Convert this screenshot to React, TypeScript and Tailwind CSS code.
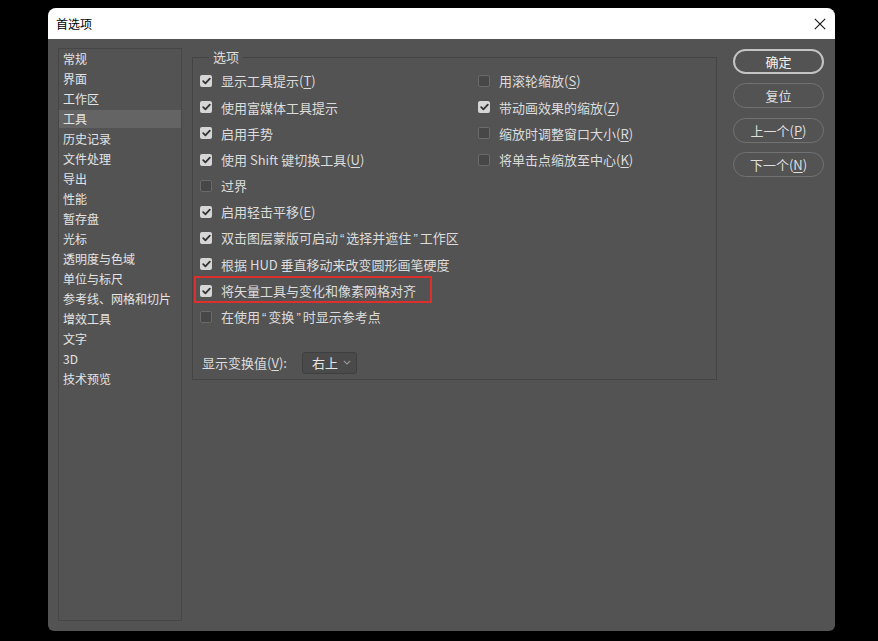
import React from "react"

const font = { fontFamily: '"Noto Sans CJK SC", "Noto Sans", sans-serif' }

const categories = [
  "常规",
  "界面",
  "工作区",
  "工具",
  "历史记录",
  "文件处理",
  "导出",
  "性能",
  "暂存盘",
  "光标",
  "透明度与色域",
  "单位与标尺",
  "参考线、网格和切片",
  "增效工具",
  "文字",
  "3D",
  "技术预览",
]

type Opt = { label: string; key?: string; checked: boolean }

const leftOptions: Opt[] = [
  { label: "显示工具提示", key: "T", checked: true },
  { label: "使用富媒体工具提示", checked: true },
  { label: "启用手势", checked: true },
  { label: "使用 Shift 键切换工具", key: "U", checked: true },
  { label: "过界", checked: false },
  { label: "启用轻击平移", key: "E", checked: true },
  { label: "双击图层蒙版可启动“选择并遮住”工作区", checked: true },
  { label: "根据 HUD 垂直移动来改变圆形画笔硬度", checked: true },
  { label: "将矢量工具与变化和像素网格对齐", checked: true },
  { label: "在使用“变换”时显示参考点", checked: false },
]

const rightOptions: Opt[] = [
  { label: "用滚轮缩放", key: "S", checked: false },
  { label: "带动画效果的缩放", key: "Z", checked: true },
  { label: "缩放时调整窗口大小", key: "R", checked: false },
  { label: "将单击点缩放至中心", key: "K", checked: false },
]

// the dialog draws curly quotes with the narrow latin glyphs
function withQuotes(text: string) {
  return text.split(/([“”])/).map((part, i) =>
    part === "“" || part === "”" ? (
      <span key={i} className="px-[2px] font-['Liberation_Sans',sans-serif]">
        {part}
      </span>
    ) : (
      part
    )
  )
}

function Label({ label, keyChar }: { label: string; keyChar?: string }) {
  return (
    <span className="whitespace-nowrap">
      {withQuotes(label)}
      {keyChar && (
        <>
          (<span className="underline underline-offset-2">{keyChar}</span>)
        </>
      )}
    </span>
  )
}

function Checkbox({ checked }: { checked: boolean }) {
  if (checked) {
    return (
      <span className="w-[12px] h-[12px] rounded-[2px] bg-[#d6d6d6] flex items-center justify-center shrink-0">
        <svg width="9" height="8" viewBox="0 0 9 8" fill="none">
          <path d="M1.2 4.2 L3.4 6.3 L7.8 1.6" stroke="#333" strokeWidth="1.8" strokeLinecap="round" strokeLinejoin="round" />
        </svg>
      </span>
    )
  }
  return <span className="w-[12px] h-[12px] rounded-[2px] bg-[#474747] border border-[#6a6a6a] shrink-0" />
}

function OptionRow({ opt, highlight }: { opt: Opt; highlight?: boolean }) {
  return (
    <div className="relative h-[26.2px] flex items-center gap-[9px]">
      <Checkbox checked={opt.checked} />
      <Label label={opt.label} keyChar={opt.key} />
      {highlight && (
        <span className="absolute left-[-6px] top-[-2px] w-[238px] h-[27px] border-2 border-[#dd2f2c] pointer-events-none" />
      )}
    </div>
  )
}

function PillButton({ children, primary }: { children: React.ReactNode; primary?: boolean }) {
  return (
    <button
      className={`w-[91px] h-[25px] rounded-full text-[13px] leading-none flex items-center justify-center ${
        primary ? "border-2 border-[#c4c4c4] text-[#f2f2f2]" : "border-[1.5px] border-[#727272] text-[#dedede]"
      }`}
    >
      {children}
    </button>
  )
}

export default function App() {
  return (
    <div className="w-[878px] h-[641px] bg-black pt-[8px] pl-[48px] overflow-hidden" style={font}>
      <div className="w-[787px] h-[623px] flex flex-col rounded-t-[8px] rounded-b-[6px] overflow-hidden bg-[#535353]">
        <div className="h-[31px] bg-white flex items-center justify-between pl-[8px] pr-[9px] shrink-0">
          <span className="text-[12px] text-black leading-none">首选项</span>
          <svg width="12" height="12" viewBox="0 0 12 12" fill="none">
            <path d="M0.8 0.8 L11.2 11.2 M11.2 0.8 L0.8 11.2" stroke="#111" strokeWidth="1.1" />
          </svg>
        </div>

        <div className="flex-1 flex pt-[9px] pl-[10px] pr-[11px] pb-[10px] text-[#dcdcdc]">
          <aside className="w-[124px] border border-[#464646] pt-[1px] shrink-0">
            {categories.map((c) => (
              <div
                key={c}
                className={`h-[18px] mb-[2px] pl-[4px] text-[12px] leading-[18px] text-[#e4e4e4] whitespace-nowrap ${
                  c === "工具" ? "bg-[#646464]" : ""
                }`}
              >
                {c}
              </div>
            ))}
          </aside>

          <fieldset className="ml-[10px] mt-[1px] w-[525px] h-[331px] self-start border border-[#444444] shrink-0 text-[13px]">
            <legend className="ml-[16px] px-[4px] leading-[16px] text-[13px] text-[#dedede]">选项</legend>
            <div className="pt-[3px] pl-[7px] grid grid-cols-[278px_1fr]">
              <div className="flex flex-col">
                {leftOptions.map((o, i) => (
                  <OptionRow key={o.label} opt={o} highlight={i === 8} />
                ))}
              </div>
              <div className="flex flex-col">
                {rightOptions.map((o) => (
                  <OptionRow key={o.label} opt={o} />
                ))}
              </div>
            </div>
            <div className="mt-[22px] pl-[9px] flex items-center">
              <span className="w-[100px] whitespace-nowrap">
                显示变换值(<span className="underline underline-offset-2">V</span>):
              </span>
              <div className="w-[55px] h-[22px] rounded-[3px] bg-[#4a4a4a] border border-[#3f3f3f] flex items-center justify-between pl-[9px] pr-[5px]">
                <span className="text-[#e6e6e6]">右上</span>
                <svg width="8" height="5" viewBox="0 0 8 5" fill="none">
                  <path d="M0.8 0.8 L4 4 L7.2 0.8" stroke="#9a9a9a" strokeWidth="1.1" />
                </svg>
              </div>
            </div>
          </fieldset>

          <div className="ml-[16px] mt-[1px] flex flex-col gap-[9.3px] shrink-0">
            <PillButton primary>确定</PillButton>
            <PillButton>复位</PillButton>
            <PillButton>
              上一个(<span className="underline underline-offset-2">P</span>)
            </PillButton>
            <PillButton>
              下一个(<span className="underline underline-offset-2">N</span>)
            </PillButton>
          </div>
        </div>
      </div>
    </div>
  )
}
